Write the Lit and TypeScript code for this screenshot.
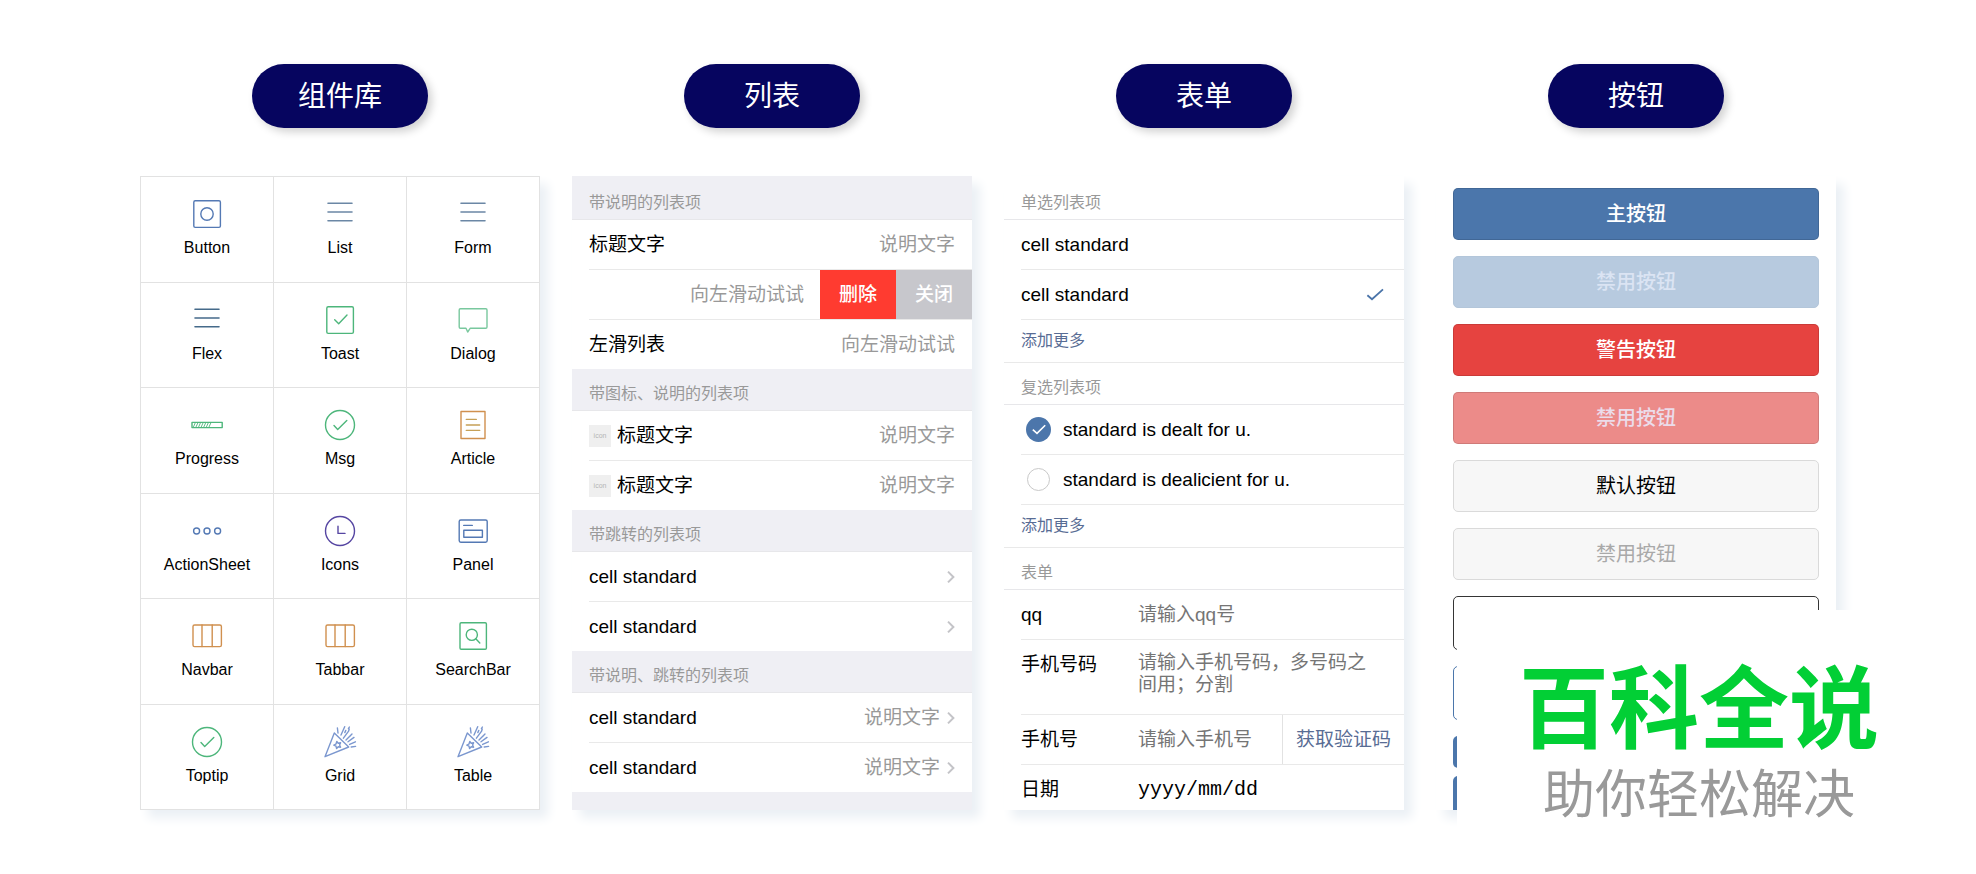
import { LitElement, html, css, svg } from "lit";
import { customElement } from "lit/decorators.js";

const BLUE = "#5479b4";
const GREEN = "#4db67b";
const ORANGE = "#d0904f";

const check = svg`<path d="M-6 .5 L-2.3 4.5 L6.8 -4.5"/>`;
const party = svg`
  <path d="M-15 14.7 L-5.7 -9 L8.7 5 Z"/>
  <path d="M-3.2 -.6 L-1.8 1.2 L.6 .8 L-.4 3 L.6 5.2 L-1.8 4.8 L-3.4 6.6 L-4 4.2 L-6.2 3.2 L-4 2 Z"/>
  <path d="M-2 -9 L-2.6 -14 M1 -7 L4.7 -15.3 M4.8 -9.4 L5.8 -11.6 M3.4 -3.8 L8.6 -10.8 L9.2 -13 M6 -2 L12 -8 M9.6 -5.6 L10.8 -6.8 M8 -.2 L14 -4.6 M9.6 2.4 L15.4 -.2 M11.2 5 L15.6 4.4 M8.4 -13.4 L9.4 -15"/>`;
const bars = svg`
  <rect x="-14" y="-11" width="28.4" height="21.6" rx="1.6"/>
  <path d="M-5 -11 V10.6 M5.2 -11 V10.6"/>`;
const lines = svg`<path stroke-width="1.6" d="M-12 -10.8 H12 M-12 -2 H12 M-12 6.8 H12"/>`;

const ICONS: [string, string, unknown][] = [
  ["Button", BLUE, svg`<rect x="-13.2" y="-13.2" width="26.6" height="26.6" rx="1.4"/><circle r="6.2"/>`],
  ["List", "#6b87a5", lines],
  ["Form", "#6b87a5", lines],
  ["Flex", "#456a8a", lines],
  ["Toast", GREEN, svg`<rect x="-13.2" y="-13.2" width="26.6" height="26.6" rx="1.4"/><path d="M-5.3 -.3 L-1.3 3.7 L7 -5"/>`],
  ["Dialog", "#79c89e", svg`<path d="M-12.6 -11.2 H12.8 a1.2 1.2 0 0 1 1.2 1.2 V7 a1.2 1.2 0 0 1 -1.2 1.2 H-2.7 L-5.3 12 L-7 8.2 H-12.6 a1.2 1.2 0 0 1 -1.2 -1.2 V-10 a1.2 1.2 0 0 1 1.2 -1.2 Z"/>`],
  ["Progress", GREEN, svg`<rect x="-15" y="-2.6" width="30.2" height="5.2"/><path stroke-width=".9" d="M-13.6 2 L-11.8 -2 M-11 2 L-9.2 -2 M-8.4 2 L-6.6 -2 M-5.8 2 L-4 -2 M-3.2 2 L-1.4 -2 M-.6 2 L1.2 -2 M2 2 L3.8 -2"/>`],
  ["Msg", GREEN, svg`<circle r="14.5"/>${check}`],
  ["Article", ORANGE, svg`<rect x="-12" y="-13.5" width="24" height="27"/><path stroke="#c6a057" d="M-6.7 -5.6 H3.3 M-6.7 0 H6.7 M-6.7 5.4 H6.7"/>`],
  ["ActionSheet", BLUE, svg`<circle cx="-10.4" r="3"/><circle r="3"/><circle cx="10.6" r="3"/>`],
  ["Icons", "#5646a2", svg`<circle r="14.5"/><path d="M-2 -4.8 V2.4 H5"/>`],
  ["Panel", BLUE, svg`<rect x="-13.8" y="-11" width="28" height="22.2" rx="1.6"/><path d="M-9.3 -5.6 H-.7"/><rect x="-9.2" y="-.8" width="18.6" height="7"/>`],
  ["Navbar", ORANGE, bars],
  ["Tabbar", ORANGE, bars],
  ["SearchBar", GREEN, svg`<rect x="-13" y="-13.2" width="26.4" height="26.4" rx="1.2"/><circle cx="-1.2" cy="-1.2" r="5.6"/><path d="M2.8 2.8 L6.8 7"/>`],
  ["Toptip", GREEN, svg`<circle r="14.5"/>${check}`],
  ["Grid", "#7b97cf", party],
  ["Table", "#7b97cf", party],
];

const chevron = html`<svg class="chevron" viewBox="0 0 8 12" aria-hidden="true"><path d="M1 .6 L6.4 6 L1 11.4" /></svg>`;

@customElement("app-root")
export class AppRoot extends LitElement {
  static styles = css`
    :host {
      display: block;
      position: relative;
      min-height: 100vh;
      box-sizing: border-box;
      padding: 64px 140px;
      background: #fff;
      color: #000;
      font: 19px/22px "Liberation Sans", "Noto Sans CJK SC", sans-serif;
    }
    *, *::before { box-sizing: border-box; }
    button, input, textarea { font: inherit; color: inherit; margin: 0; }
    a { text-decoration: none; color: inherit; }

    .columns {
      display: grid;
      grid-template-columns: repeat(4, minmax(0, 1fr));
      gap: 32px;
    }
    .column {
      display: flex;
      flex-direction: column;
      align-items: center;
      gap: 48px;
    }
    .pill {
      margin: 0;
      width: 176px;
      padding-top: 2px;
      border-radius: 32px;
      background: #06055f;
      box-shadow: 4px 4px 8px rgba(0, 0, 0, 0.18);
      color: #fff;
      font-size: 28px;
      font-weight: 400;
      line-height: 62px;
      text-align: center;
    }
    .card {
      width: 100%;
      height: 634px;
      overflow: hidden;
      background: #fff;
      box-shadow: 8px 8px 10px #ebf0f5;
    }
    .card.grey { background: #efeff4; }

    .tiles {
      display: grid;
      grid-template-columns: repeat(3, 1fr);
      grid-template-rows: repeat(6, 1fr);
      border: solid #e2e2e2;
      border-width: 1px 0 0 1px;
    }
    .tile {
      display: flex;
      flex-direction: column;
      align-items: center;
      gap: 6px;
      padding-top: 20px;
      border: solid #e2e2e2;
      border-width: 0 1px 1px 0;
      font-size: 16px;
    }
    .tile svg {
      width: 34px;
      height: 34px;
      fill: none;
      stroke-width: 1.4;
      stroke-linecap: round;
      stroke-linejoin: round;
    }

    .title {
      margin: 0;
      padding: 14px 17px 5px;
      color: #999;
      font-size: 16px;
      font-weight: 400;
    }
    .title:first-child { padding-top: 16px; }
    .group {
      border-top: 1px solid #e7e7ea;
      background: #fff;
      padding-left: 17px;
    }
    .group.closed { border-bottom: 1px solid #e9e9e9; }
    .row {
      display: flex;
      align-items: center;
      min-height: 49px;
      padding-right: 17px;
    }
    .row + .row {
      min-height: 50px;
      border-top: 1px solid #e9e9e9;
    }
    .row.flush { padding-right: 0; align-items: stretch; }
    .grow { flex: 1; min-width: 0; }
    .value { color: #999; }
    .swiped {
      flex: 1;
      align-self: center;
      padding-right: 16px;
      text-align: right;
      color: #999;
    }
    .swipe {
      width: 76px;
      border: 0;
      padding: 0;
      color: #fff;
      font-weight: 500;
    }
    .delete { background: #ff3b30; }
    .close { background: #c7c7cc; }
    .thumb {
      width: 22px;
      margin-right: 6px;
      background: #efefef;
      color: #b5b5b5;
      font-size: 7px;
      text-align: center;
    }
    .chevron {
      width: 8px;
      height: 12px;
      margin-left: 7px;
      fill: none;
      stroke: #c4c4c8;
      stroke-width: 2;
      overflow: visible;
    }

    .row.more {
      min-height: 43px;
      color: #586c94;
      font-size: 16px;
    }
    .mark {
      display: grid;
      place-items: center;
      width: 25px;
      height: 25px;
    }
    .mark > * { grid-area: 1 / 1; }
    .mark input { appearance: none; width: 25px; height: 25px; }
    .mark svg { pointer-events: none; fill: none; visibility: hidden; }
    .mark input:checked + svg { visibility: visible; }
    .mark.box { margin: 0 12px 0 5px; }
    .mark.box input { width: 23px; height: 23px; border: 1px solid #c9c9c9; border-radius: 50%; }
    .mark.box input:checked { width: 25px; height: 25px; border: 0; background: #4c76ab; }

    .label { width: 117px; line-height: 49px; }
    .row.top { align-items: flex-start; }
    .field {
      display: block;
      flex: 1;
      min-width: 0;
      padding: 0;
      border: 0;
      outline: 0;
      background: none;
      resize: none;
      overflow: hidden;
    }
    .field::placeholder { color: #757575; opacity: 1; }
    .area { padding: 12px 4px 18px 0; }
    .date { font-family: "Liberation Mono", monospace; font-size: 20px; }
    .date::placeholder { color: #000; }
    .code {
      border: solid #e2e2e2;
      border-width: 0 0 0 1px;
      padding: 0 13px;
      background: none;
      color: #586c94;
    }

    .buttons {
      display: flex;
      flex-direction: column;
      gap: 16px;
      padding: 12px 17px 0;
    }
    .btn {
      flex: none;
      height: 52px;
      padding: 0;
      border: 1px solid rgba(0, 0, 0, 0.12);
      border-radius: 5px;
      font-size: 20px;
    }
    .primary, .warn { font-weight: 500; }
    .primary { background: #4b76ab; color: #fff; }
    .primary:disabled { background: #b7cadf; color: #dbe4f3; border-color: #b3c6da; }
    .warn { background: #e64340; color: #fff; }
    .warn:disabled { background: #ec8b89; color: #ebdcea; }
    .default { background: #f7f7f7; border-color: #dadada; }
    .default:disabled { color: #a9a9a9; }
    .plain { height: 54px; background: none; border-color: #353535; }
    .plain.tint { border-color: #4b76ab; }
    .minis {
      display: flex;
      flex-direction: column;
      gap: 8px;
    }
    .mini { height: 32px; border: 0; background: #4b76ab; }
    .mini:last-child { height: 40px; }

    .brand {
      position: absolute;
      right: 0;
      bottom: 0;
      width: 519px;
      height: 264px;
      padding: 50px 35px 0 0;
      background: #fff;
      text-align: center;
    }
    .brand p { margin: 0; }
    .brand .name {
      color: #02cf35;
      font-size: 90px;
      font-weight: 700;
      line-height: 100px;
    }
    .brand .motto {
      color: #999;
      font-size: 52px;
      line-height: 70px;
    }
  `;

  private library() {
    return html`<nav class="card tiles" aria-label="组件库">
      ${ICONS.map(
        ([name, color, shape]) => html`<a class="tile" href="#${name}">
          <svg viewBox="-17 -17 34 34" stroke=${color} aria-hidden="true">${shape}</svg>${name}
        </a>`
      )}
    </nav>`;
  }

  private list() {
    const described = html`<div class="row">
      <span class="thumb">icon</span><span class="grow">标题文字</span><span class="value">说明文字</span>
    </div>`;
    const link = html`<a class="row" href="#cell"><span class="grow">cell standard</span>${chevron}</a>`;
    const describedLink = html`<a class="row" href="#cell">
      <span class="grow">cell standard</span><span class="value">说明文字</span>${chevron}
    </a>`;
    return html`<div class="card grey">
      <h3 class="title">带说明的列表项</h3>
      <div class="group">
        <div class="row"><span class="grow">标题文字</span><span class="value">说明文字</span></div>
        <div class="row flush">
          <span class="swiped">向左滑动试试</span>
          <button class="swipe delete">删除</button>
          <button class="swipe close">关闭</button>
        </div>
        <div class="row"><span class="grow">左滑列表</span><span class="value">向左滑动试试</span></div>
      </div>
      <h3 class="title">带图标、说明的列表项</h3>
      <div class="group">${described}${described}</div>
      <h3 class="title">带跳转的列表项</h3>
      <div class="group">${link}${link}</div>
      <h3 class="title">带说明、跳转的列表项</h3>
      <div class="group">${describedLink}${describedLink}</div>
    </div>`;
  }

  private radio(on: boolean) {
    return html`<label class="row">
      <span class="grow">cell standard</span>
      <span class="mark">
        <input type="radio" name="cell" .checked=${on} />
        <svg width="18" height="13" viewBox="0 0 18 13"><path d="M1.4 7.2 L6 11.2 L17 1.4" stroke="#4a74a9" stroke-width="1.8" /></svg>
      </span>
    </label>`;
  }

  private checkbox(text: string, on: boolean) {
    return html`<label class="row">
      <span class="mark box">
        <input type="checkbox" .checked=${on} />
        <svg width="14" height="11" viewBox="0 0 14 11"><path d="M.8 5.6 L5 9.4 L13.2 1.2" stroke="#fff" stroke-width="1.6" /></svg>
      </span>
      <span>${text}</span>
    </label>`;
  }

  private form() {
    return html`<form class="card">
      <h3 class="title">单选列表项</h3>
      <div class="group closed">
        ${this.radio(false)}${this.radio(true)}
        <a class="row more" href="#more">添加更多</a>
      </div>
      <h3 class="title">复选列表项</h3>
      <div class="group closed">
        ${this.checkbox("standard is dealt for u.", true)}
        ${this.checkbox("standard is dealicient for u.", false)}
        <a class="row more" href="#more">添加更多</a>
      </div>
      <h3 class="title">表单</h3>
      <div class="group closed">
        <div class="row">
          <label class="label" for="qq">qq</label>
          <input class="field" id="qq" placeholder="请输入qq号" />
        </div>
        <div class="row top">
          <label class="label" for="phones">手机号码</label>
          <textarea class="field area" id="phones" rows="2" placeholder="请输入手机号码，多号码之间用；分割"></textarea>
        </div>
        <div class="row flush">
          <label class="label" for="phone">手机号</label>
          <input class="field" id="phone" type="tel" placeholder="请输入手机号" />
          <button class="code" type="button">获取验证码</button>
        </div>
        <div class="row">
          <label class="label" for="date">日期</label>
          <input class="field date" id="date" placeholder="yyyy/mm/dd" />
        </div>
      </div>
    </form>`;
  }

  private buttons() {
    return html`<div class="card buttons">
      <button class="btn primary">主按钮</button>
      <button class="btn primary" disabled>禁用按钮</button>
      <button class="btn warn">警告按钮</button>
      <button class="btn warn" disabled>禁用按钮</button>
      <button class="btn default">默认按钮</button>
      <button class="btn default" disabled>禁用按钮</button>
      <button class="btn plain"></button>
      <button class="btn plain tint"></button>
      <div class="minis">
        <button class="btn mini"></button>
        <button class="btn mini"></button>
      </div>
    </div>`;
  }

  private column(title: string, body: unknown) {
    return html`<section class="column"><h2 class="pill">${title}</h2>${body}</section>`;
  }

  render() {
    return html`
      <main class="columns">
        ${this.column("组件库", this.library())}
        ${this.column("列表", this.list())}
        ${this.column("表单", this.form())}
        ${this.column("按钮", this.buttons())}
      </main>
      <aside class="brand">
        <p class="name">百科全说</p>
        <p class="motto">助你轻松解决</p>
      </aside>
    `;
  }
}
